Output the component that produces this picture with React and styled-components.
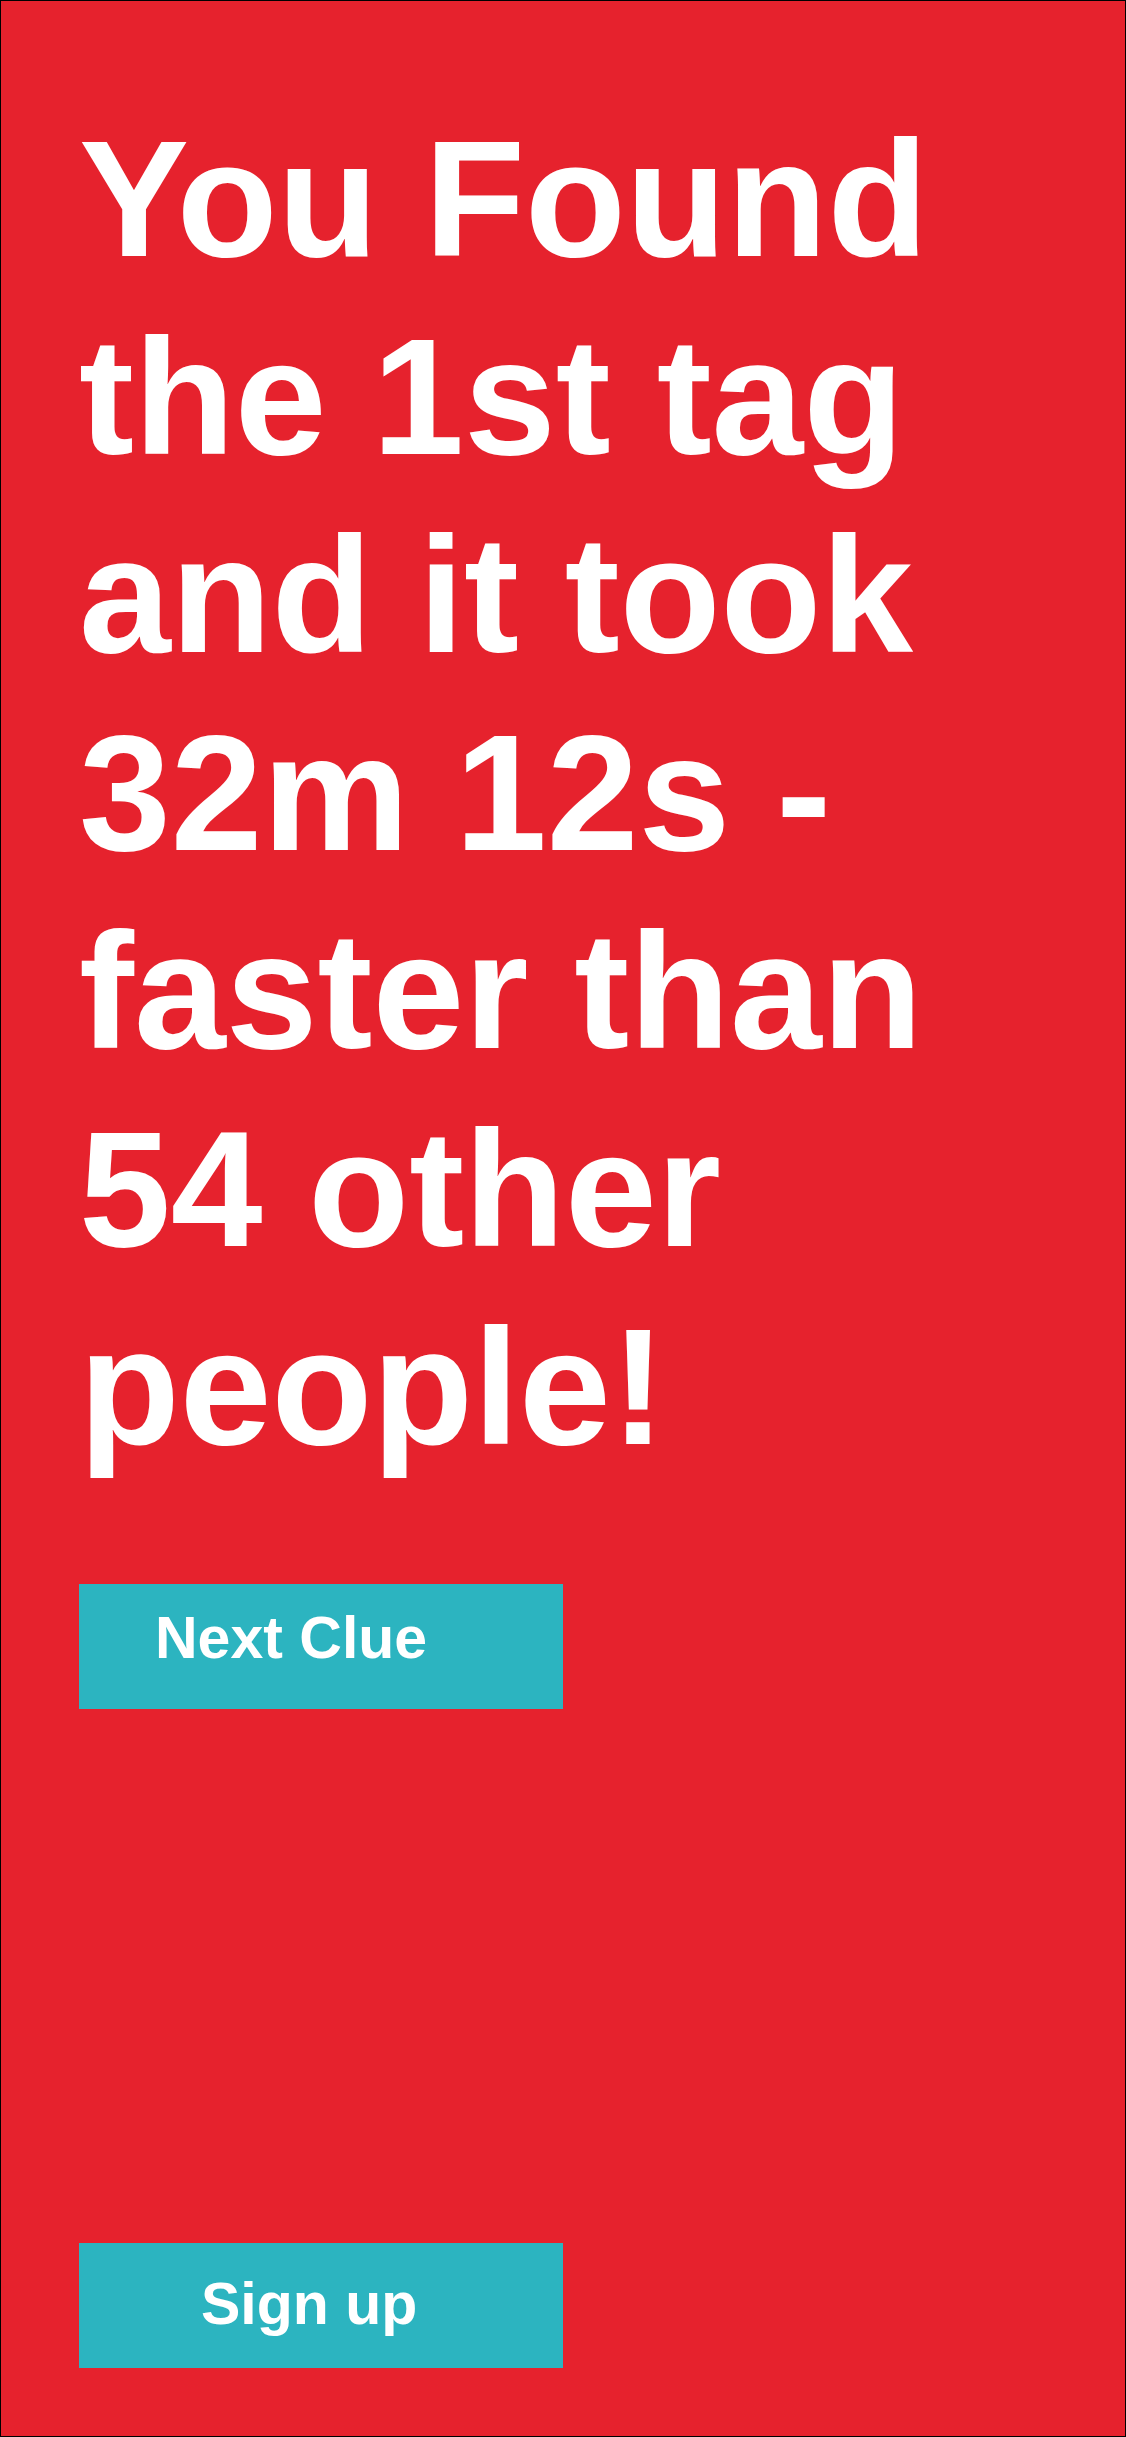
import styled, { createGlobalStyle } from 'styled-components';

const GlobalStyle = createGlobalStyle`
  html, body {
    margin: 0;
    padding: 0;
  }
  body {
    font-family: "Liberation Sans", Arial, sans-serif;
  }
`;

const Page = styled.div`
  box-sizing: border-box;
  width: 100%;
  height: 100vh;
  background-color: #e6222d;
  border: 1px solid #000;
  display: flex;
  flex-direction: column;
  padding: 99px 0 68px 78px;
`;

const Heading = styled.h1`
  margin: 0;
  color: #ffffff;
  font-size: 165px;
  line-height: 198px;
  font-weight: 700;
  width: 960px;
`;

const Button = styled.button`
  box-sizing: border-box;
  width: 484px;
  height: 125px;
  margin-top: ${(p) => p.$top || '0'};
  border: none;
  border-radius: 0;
  background-color: #2cb4c0;
  color: #ffffff;
  font-family: "Liberation Sans", Arial, sans-serif;
  font-weight: 700;
  font-size: 59px;
  line-height: 1;
  text-align: left;
  padding: ${(p) => p.$pad};
  display: flex;
  align-items: flex-start;
  cursor: pointer;
`;

export default function App() {
  return (
    <>
      <GlobalStyle />
      <Page>
        <Heading>
          You Found the 1st tag and it took 32m 12s - faster than 54 other people!
        </Heading>
        <Button $top="98px" $pad="25px 0 0 76px">Next Clue</Button>
        <Button $top="auto" $pad="32px 0 0 122px">Sign up</Button>
      </Page>
    </>
  );
}
